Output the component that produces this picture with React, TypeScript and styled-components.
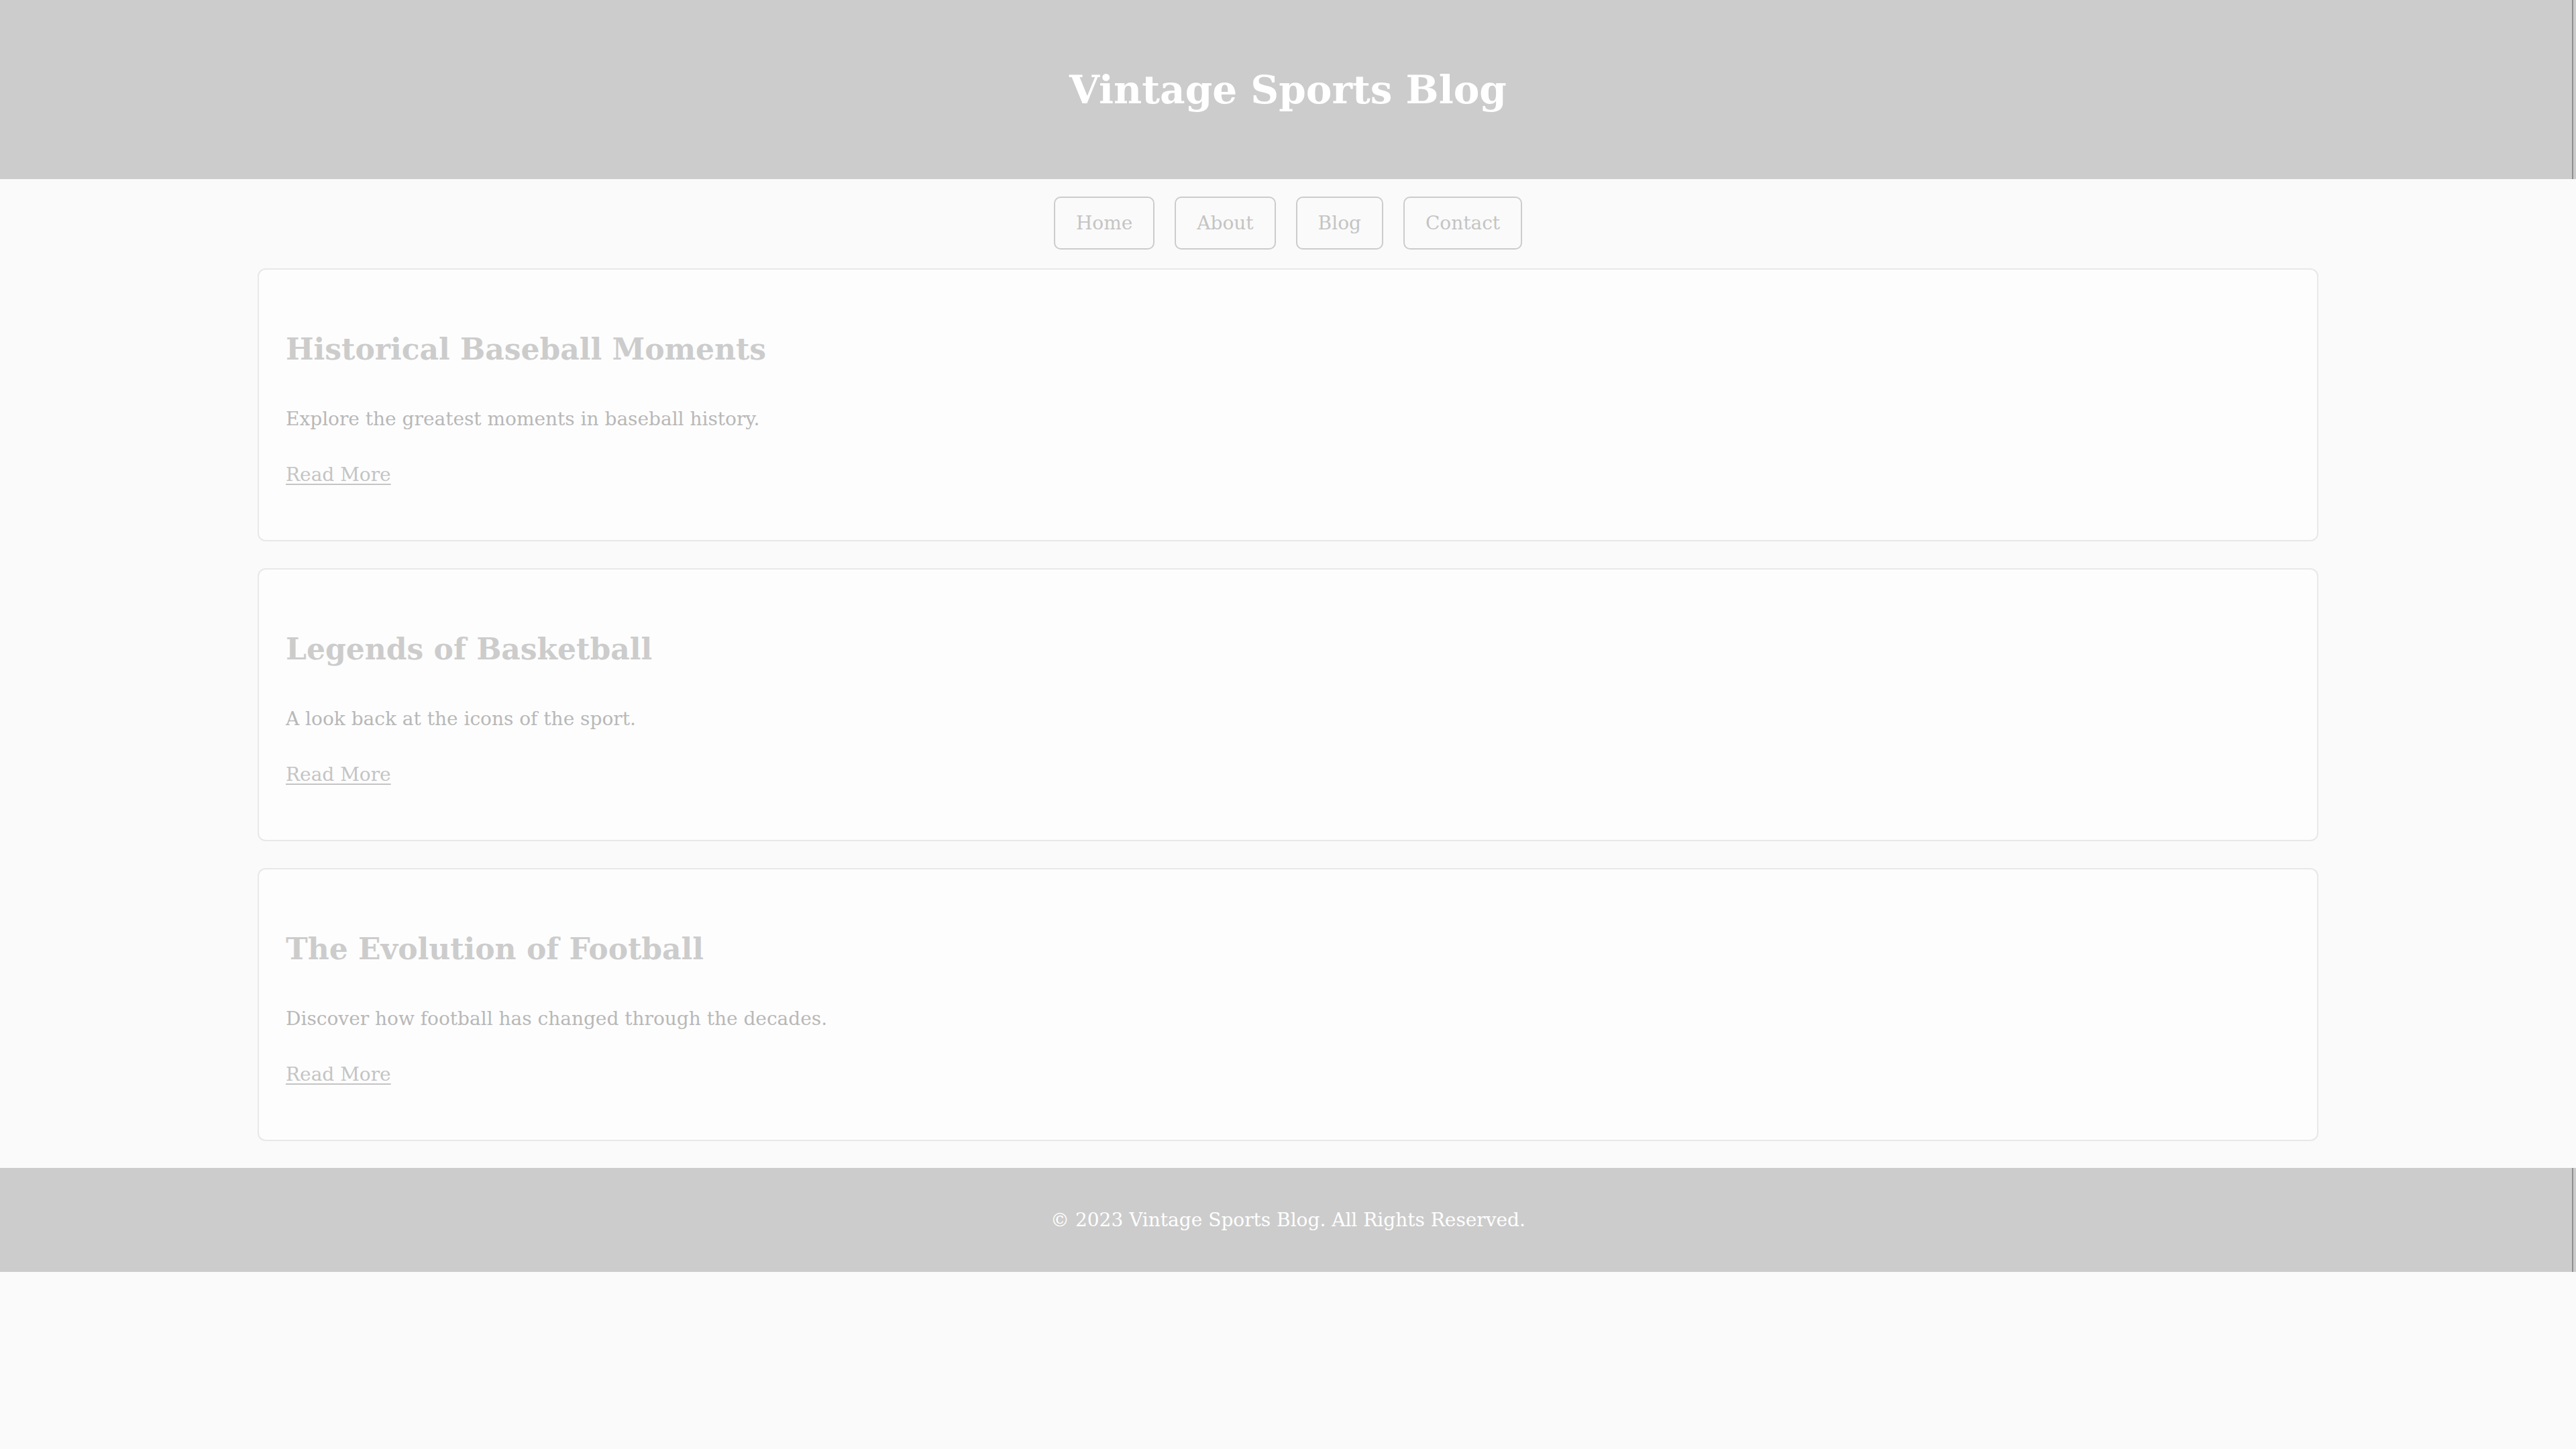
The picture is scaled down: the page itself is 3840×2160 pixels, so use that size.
import React from "react";
import styled, { createGlobalStyle } from "styled-components";

const GlobalStyle = createGlobalStyle`
  body {
    margin: 0;
    background: #fafafa;
    font-family: "DejaVu Serif", "Liberation Serif", serif;
  }
`;

const Header = styled.header`
  height: 267px;
  display: flex;
  align-items: center;
  justify-content: center;
  background: #cccccc;
  box-shadow: inset -4px 0 0 #cccccc, inset -6px 0 0 #8f8f8f;
`;

const Title = styled.h1`
  margin: 0;
  color: #ffffff;
  font-size: 58px;
  font-weight: bold;
  line-height: 102px;
`;

const Nav = styled.nav`
  display: flex;
  justify-content: center;
  gap: 30px;
  padding: 26px 0 28px;
`;

const NavLink = styled.a`
  display: block;
  padding: 12px 31px;
  border: 2px solid #cccccc;
  border-radius: 10px;
  color: #c4c4c4;
  font-size: 28px;
  line-height: 51px;
  text-decoration: none;
`;

const Posts = styled.main`
  width: 80%;
  margin: 0 auto;
  display: flex;
  flex-direction: column;
  gap: 40px;
  padding-bottom: 40px;
`;

const Card = styled.article`
  padding: 40px;
  background: #fdfdfd;
  border: 2px solid #e8e8e8;
  border-radius: 12px;
`;

const CardTitle = styled.h2`
  margin: 40px 0;
  color: #cccccc;
  font-size: 44px;
  font-weight: bold;
  line-height: 77px;
`;

const Excerpt = styled.p`
  margin: 0 0 32px;
  color: #b8b8b8;
  font-size: 28px;
  line-height: 51px;
`;

const ReadMore = styled.a`
  color: #c4c4c4;
  text-decoration: underline;
  text-decoration-thickness: 2px;
  text-underline-offset: 4px;
`;

const Footer = styled.footer`
  padding: 52px 0;
  background: #cccccc;
  color: #ffffff;
  text-align: center;
  font-size: 28px;
  line-height: 51px;
  box-shadow: inset -4px 0 0 #cccccc, inset -6px 0 0 #8f8f8f;
`;

const posts = [
  {
    title: "Historical Baseball Moments",
    excerpt: "Explore the greatest moments in baseball history.",
  },
  {
    title: "Legends of Basketball",
    excerpt: "A look back at the icons of the sport.",
  },
  {
    title: "The Evolution of Football",
    excerpt: "Discover how football has changed through the decades.",
  },
];

const links = ["Home", "About", "Blog", "Contact"];

function App() {
  return (
    <>
      <GlobalStyle />
      <Header>
        <Title>Vintage Sports Blog</Title>
      </Header>
      <Nav>
        {links.map((l) => (
          <NavLink key={l} href="#">
            {l}
          </NavLink>
        ))}
      </Nav>
      <Posts>
        {posts.map((p) => (
          <Card key={p.title}>
            <CardTitle>{p.title}</CardTitle>
            <Excerpt>{p.excerpt}</Excerpt>
            <Excerpt>
              <ReadMore href="#">Read More</ReadMore>
            </Excerpt>
          </Card>
        ))}
      </Posts>
      <Footer>© 2023 Vintage Sports Blog. All Rights Reserved.</Footer>
    </>
  );
}

export default App;
